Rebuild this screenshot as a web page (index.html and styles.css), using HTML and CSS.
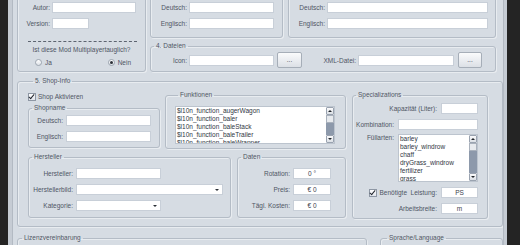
FILE: index.html
```html
<!DOCTYPE html>
<html lang="de">
<head>
<meta charset="UTF-8" />
<meta name="viewport" content="width=device-width, initial-scale=1.0" />
<title>Mod-Editor</title>
<link rel="stylesheet" href="styles.css">
</head>
<body>
<div class="frame">
<div class="client">

<!-- Obere Gruppen -->
<div class="top">
  <fieldset class="group meta">
    <div class="row"><label class="lbl">Autor:</label><input type="text" class="w84"></div>
    <div class="row"><label class="lbl">Version:</label><input type="text" class="w37"></div>
    <div class="dash"></div>
    <p class="question">Ist diese Mod Multiplayertauglich?</p>
    <div class="radios">
      <span class="opt"><span class="radio"></span>Ja</span>
      <span class="opt"><span class="radio checked"></span>Nein</span>
    </div>
  </fieldset>

  <div class="topRight">
    <div class="names">
      <fieldset class="group title">
        <div class="row"><label class="lbl">Deutsch:</label><input type="text" class="w85"></div>
        <div class="row"><label class="lbl">Englisch:</label><input type="text" class="w85"></div>
      </fieldset>
      <fieldset class="group desc">
        <div class="row"><label class="lbl">Deutsch:</label><input type="text" class="w161"></div>
        <div class="row"><label class="lbl">Englisch:</label><input type="text" class="w161"></div>
      </fieldset>
    </div>
    <fieldset class="group files">
      <legend>4. Dateien</legend>
      <div class="fileRow">
        <label class="lbl">Icon:</label><input type="text" class="w85"><button class="browse">...</button>
        <label class="lbl xml">XML-Datei:</label><input type="text" class="w96"><button class="browse last">...</button>
      </div>
    </fieldset>
  </div>
</div>

<!-- 5. Shop-Info -->
<fieldset class="group shop">
  <legend>5. Shop-Info</legend>
  <div class="shopBody">
    <div class="shopLeft">
      <div class="shopTop">
        <div class="shopCol">
          <div class="checkRow"><span class="check on"></span>Shop Aktivieren</div>
          <fieldset class="group shopname">
            <legend>Shopname</legend>
            <div class="row"><label class="lbl">Deutsch:</label><input type="text" class="w85"></div>
            <div class="row"><label class="lbl">Englisch:</label><input type="text" class="w85"></div>
          </fieldset>
        </div>
        <fieldset class="group funcs">
          <legend>Funktionen</legend>
          <div class="list">
            <div class="items">
              <div>$l10n_function_augerWagon</div>
              <div>$l10n_function_baler</div>
              <div>$l10n_function_baleStack</div>
              <div>$l10n_function_baleTrailer</div>
              <div>$l10n_function_baleWrapper</div>
            </div>
            <div class="scroll"><span class="btn up"></span><span class="thumb"></span><span class="track"></span><span class="btn down"></span></div>
          </div>
        </fieldset>
      </div>

      <div class="shopBottom">
        <fieldset class="group maker">
          <legend>Hersteller</legend>
          <div class="row"><label class="lbl">Hersteller:</label><input type="text" class="w85"></div>
          <div class="row"><label class="lbl">Herstellerbild:</label><span class="select w147"><span class="caret"></span></span></div>
          <div class="row"><label class="lbl">Kategorie:</label><span class="select w85"><span class="caret"></span></span></div>
        </fieldset>
        <fieldset class="group data">
          <legend>Daten</legend>
          <div class="row"><label class="lbl">Rotation:</label><input type="text" class="w38 center" value="0 °"></div>
          <div class="row"><label class="lbl">Preis:</label><input type="text" class="w38 center" value="€ 0"></div>
          <div class="row"><label class="lbl">Tägl. Kosten:</label><input type="text" class="w38 center" value="€ 0"></div>
        </fieldset>
      </div>
    </div>

    <fieldset class="group spec">
      <legend>Specializations</legend>
      <div class="row"><label class="lbl">Kapazität (Liter):</label><input type="text" class="w37"></div>
      <div class="row"><label class="lbl">Kombination:</label><input type="text" class="w80"></div>
      <div class="row tall">
        <label class="lbl">Füllarten:</label>
        <div class="list">
          <div class="items">
            <div>barley</div>
            <div>barley_windrow</div>
            <div>chaff</div>
            <div>dryGrass_windrow</div>
            <div>fertilizer</div>
            <div>grass</div>
          </div>
          <div class="scroll"><span class="btn up"></span><span class="thumb"></span><span class="track"></span><span class="btn down"></span></div>
        </div>
      </div>
      <div class="row"><span class="check on"></span><label class="lbl">Benötigte&nbsp; Leistung:</label><input type="text" class="w37 center" value="PS"></div>
      <div class="row"><label class="lbl">Arbeitsbreite:</label><input type="text" class="w37 center" value="m"></div>
    </fieldset>
  </div>
</fieldset>

<!-- Untere Gruppen -->
<div class="bottom">
  <fieldset class="group license"><legend>Lizenzvereinbarung</legend></fieldset>
  <fieldset class="group lang"><legend>Sprache/Language</legend></fieldset>
</div>

</div>
</div>
</body>
</html>
```

FILE: styles.css
```css
* { box-sizing: border-box; }

body {
  margin: 0;
  background: #242424;
  font-family: "Liberation Sans", Arial, sans-serif;
  font-size: 6.5px;
  color: #4f5663;
  overflow: hidden;
}

/* Fensterrahmen */
.frame {
  margin-left: 8px;
  width: 499px;
  height: 245px;
  background: #c6ccd4;
  overflow: hidden;
}
.client {
  margin-left: 4px;
  width: 492px;
  height: 100%;
  background: #d6dce3;
  border-left: 1px solid #b3bac3;
  border-right: 1px solid #b3bac3;
  padding-left: 4px;
  overflow: hidden;
}

/* Gruppen */
.group {
  margin: 0;
  padding: 0;
  border: 1px solid #b4bcc6;
  border-radius: 3px;
  min-width: 0;
  box-shadow: inset 1px 1px 0 rgba(255,255,255,.45), 1px 1px 0 rgba(255,255,255,.45);
}
.group legend {
  margin-left: 3px;
  padding: 0 2px;
  height: 8px;
  line-height: 8px;
  color: #4f5663;
}

.row { display: flex; align-items: center; gap: 2px; height: 11px; }
.row + .row { margin-top: 5px; }
.lbl { flex: none; text-align: right; line-height: 11px; white-space: nowrap; }

input {
  display: block;
  flex: none;
  height: 11px;
  margin: 0;
  padding: 0 2px;
  border: 1px solid #c8cfd8;
  border-radius: 0;
  background: #fff;
  font: inherit;
  color: #3b414c;
  outline: none;
}
input.center { text-align: center; }

.w37 { width: 37px; }
.w38 { width: 38px; }
.w80 { width: 80px; }
.w84 { width: 84px; }
.w85 { width: 85px; }
.w96 { width: 96px; }
.w147 { width: 147px; }
.w161 { width: 161px; }

/* Obere Zeile */
.top { display: flex; gap: 4px; margin-top: -4px; }
.meta { width: 129px; height: 76px; padding-top: 5px; }
.meta .lbl { width: 32px; }
.dash { margin: 12px 0 0 10px; width: 109px; border-top: 1px dashed #5d6470; }
.question { margin: 4px 0 0; text-align: center; line-height: 8px; }
.radios {
  display: flex;
  justify-content: space-between;
  align-items: center;
  height: 8px;
  margin-top: 4px;
  padding: 0 14px 0 17px;
}
.opt { display: flex; align-items: center; gap: 3px; }
.radio {
  display: flex;
  align-items: center;
  justify-content: center;
  width: 7px;
  height: 7px;
  border: 1px solid #9da5b0;
  border-radius: 50%;
  background: linear-gradient(#fff, #dde1e7);
}
.radio.checked::after {
  content: "";
  width: 3px;
  height: 3px;
  border-radius: 50%;
  background: #2c3038;
}

.topRight { width: 346px; }
.names { display: flex; gap: 5px; }
.title { width: 133px; height: 42px; padding-top: 5px; }
.desc { width: 208px; height: 42px; padding-top: 5px; }
.title .lbl, .desc .lbl { width: 36px; }

.files { height: 30px; margin-top: 4px; padding-top: 2px; }
.fileRow { display: flex; align-items: center; height: 16px; }
.files .lbl { width: 36px; }
.files input { margin-left: 2px; }
.files .xml { width: 54px; }
.browse {
  flex: none;
  width: 25px;
  height: 16px;
  margin-left: 3px;
  padding: 0;
  border: 1px solid #a6aeb8;
  border-radius: 2px;
  background: linear-gradient(#fafbfc, #dce0e6);
  font: inherit;
  color: #3b414c;
  line-height: 12px;
}
.browse.last { width: 24px; margin-left: 4px; }

/* Shop-Info */
.shop { height: 150px; margin-top: 5px; padding-left: 10px; }
.shop > legend { margin-left: 5px; }
.shopBody { display: flex; gap: 6px; padding-top: 6px; }
.shopLeft { width: 318px; }
.shopTop { display: flex; gap: 5px; }
.shopCol { width: 132px; }

.checkRow { display: flex; align-items: center; gap: 2px; height: 11px; margin-bottom: 2px; }
.check {
  flex: none;
  position: relative;
  width: 8px;
  height: 8px;
  border: 1px solid #8e97a4;
  background: linear-gradient(#fff, #e0e4ea);
}
.check.on::after {
  content: "";
  position: absolute;
  left: 1px;
  top: -1px;
  width: 2px;
  height: 5px;
  border: solid #23272e;
  border-width: 0 1.5px 1.5px 0;
  transform: rotate(40deg);
}

.shopname { height: 44px; padding-top: 3px; }
.shopname .row { gap: 3px; }
.shopname .lbl { width: 34px; }

.funcs { width: 181px; height: 58px; padding: 7px 0 0 9px; }
.funcs .list { width: 160px; height: 38px; }

.list { display: flex; flex: none; border: 1px solid #bcc4ce; background: #fff; }
.items {
  flex: 1;
  overflow: hidden;
  padding-left: 1px;
  line-height: 8px;
  color: #30363f;
  white-space: nowrap;
}
.scroll { display: flex; flex-direction: column; width: 8px; flex: none; }
.scroll .btn {
  display: flex;
  align-items: center;
  justify-content: center;
  height: 8px;
  border: 1px solid #9aa3b0;
  border-radius: 1px;
  background: linear-gradient(#fbfbfc, #dadfe5);
}
.up::after, .down::after {
  content: "";
  border-left: 2px solid transparent;
  border-right: 2px solid transparent;
}
.up::after { border-bottom: 2px solid #22262c; }
.down::after { border-top: 2px solid #22262c; }
.thumb { height: 8px; border: 1px solid #a9b1bc; background: #e7eaee; }
.track { flex: 1; background: #8d99ab; }

.shopBottom { display: flex; gap: 6px; margin-top: 4px; }
.maker { width: 203px; height: 65px; padding-top: 7px; }
.maker .row { gap: 3px; }
.maker .lbl { width: 44px; }
.select {
  display: flex;
  align-items: center;
  justify-content: flex-end;
  flex: none;
  height: 11px;
  padding-right: 3px;
  border: 1px solid #c8cfd8;
  background: #fff;
}
.caret {
  border-left: 2px solid transparent;
  border-right: 2px solid transparent;
  border-top: 2px solid #2a2e35;
}

.data { width: 109px; height: 65px; padding: 7px 14px 0 0; }
.data .row { justify-content: flex-end; gap: 3px; }

.spec { width: 136px; height: 128px; padding: 4px 9px 0 0; }
.spec .row { justify-content: flex-end; gap: 4px; }
.spec .row.tall { height: 48px; align-items: flex-start; margin-top: 4px; }
.spec .row.tall .lbl { line-height: 8px; }
.spec .list { width: 80px; height: 48px; }
.spec .check { margin-right: -1px; }

/* Untere Gruppen */
.bottom { display: flex; margin-top: 7px; }
.license { width: 350px; height: 30px; }
.license > legend { margin-left: 4px; }
.lang { width: 123px; height: 30px; margin-left: auto; }
.lang > legend { margin-left: 6px; }
```
